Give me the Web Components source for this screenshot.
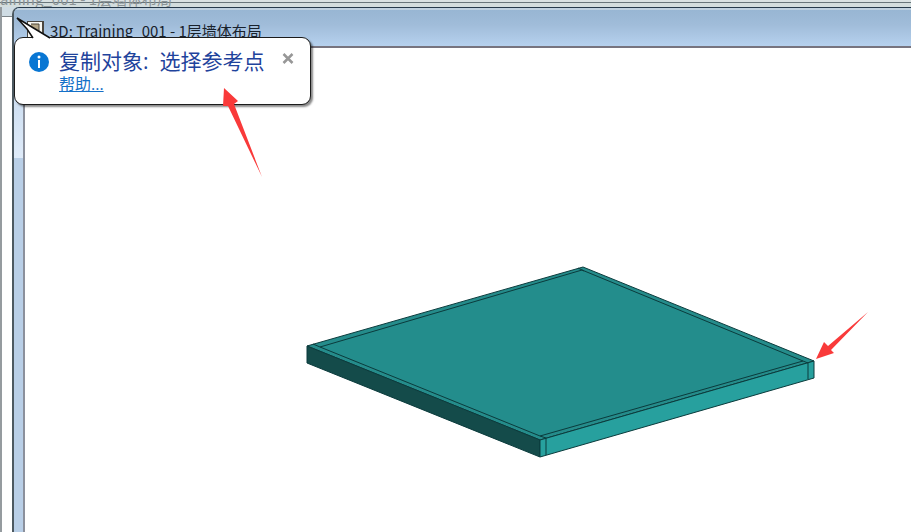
<!DOCTYPE html>
<html lang="zh-CN">
<head>
<meta charset="utf-8">
<title>3D: Training_001 - 1层墙体布局</title>
<style>
  html, body {
    height: 100%;
    margin: 0;
    overflow: hidden;
    background: #fff;
    font-family: "Open Sans", "Noto Sans CJK SC", sans-serif;
  }
</style>
</head>
<body>
<cad-desktop>
  <back-window slot="back">aining_001 - 1层墙体布局</back-window>
  <view-window>
    <span slot="title">3D: Training_001 - 1层墙体布局</span>
    <slab-model></slab-model>
  </view-window>
  <balloon-tip slot="overlay">
    复制对象:&nbsp; 选择参考点
    <a slot="link" href="#help">帮助...</a>
  </balloon-tip>
  <marker-arrows slot="overlay"></marker-arrows>
</cad-desktop>

<script>
class CadDesktop extends HTMLElement {
  constructor() {
    super();
    this.attachShadow({ mode: 'open' });
    this.shadowRoot.innerHTML = `
      <style>
        :host {
          display: block;
          position: relative;
          height: 100%;
          overflow: hidden;
        }
        .back { height: 100%; }
        .front {
          position: absolute;
          inset: 7px 0 0 12px;
        }
      </style>
      <div class="back"><slot name="back"></slot></div>
      <div class="front"><slot></slot></div>
      <slot name="overlay"></slot>
    `;
  }
}

class BackWindow extends HTMLElement {
  constructor() {
    super();
    this.attachShadow({ mode: 'open' });
    this.shadowRoot.innerHTML = `
      <style>
        :host {
          display: flex;
          flex-direction: column;
          height: 100%;
          box-sizing: border-box;
        }
        .title {
          display: flex;
          align-items: flex-end;
          height: 7px;
          overflow: hidden;
          background: linear-gradient(#d9e1e2 2px, #68757a 2px 3px, #d3dddd 3px);
          color: #8b9396;
          font-family: "Noto Sans CJK SC", sans-serif;
          font-size: 15px;
          line-height: 16px;
          white-space: nowrap;
        }
        .body {
          flex: 1;
          border-left: 2px solid #959b9f;
          background: linear-gradient(#cfdce4 9px, #7d858a 9px 10px, #fff 10px);
        }
      </style>
      <div class="title"><slot></slot></div>
      <div class="body"></div>
    `;
  }
}

class ViewWindow extends HTMLElement {
  constructor() {
    super();
    this.attachShadow({ mode: 'open' });
    this.shadowRoot.innerHTML = `
      <style>
        :host {
          display: flex;
          flex-direction: column;
          height: 100%;
          box-sizing: border-box;
          border-top: 1px solid #26394a;
          border-left: 2px solid #4c5961;
          border-top-left-radius: 7px;
          background: #bdd3ea;
          overflow: hidden;
        }
        .bar {
          display: flex;
          align-items: flex-end;
          gap: 6px;
          height: 38px;
          box-sizing: border-box;
          padding: 0 12px 5px 13px;
          border-top: 2px solid #bed0df;
          background: linear-gradient(#98b6d3, #a0bcd9 40%, #b6d1ee);
          color: #19222c;
          font-family: "Noto Sans CJK SC", sans-serif;
          font-size: 15px;
          line-height: 20px;
          white-space: nowrap;
        }
        .bar svg { flex: none; }
        .frame {
          flex: 1;
          display: flex;
          padding-left: 9px;
          background: linear-gradient(#bdd3ea, #dfebf9 112px, #b9cfe7 112px);
        }
        .view {
          flex: 1;
          border-top: 2px solid #77747f;
          border-left: 2px solid #8b909c;
          background: #fff;
        }
      </style>
      <div class="bar">
        <svg width="17" height="20" viewBox="0 0 17 20">
          <path d="M0 0h17v20H0z" fill="#4a4640"/>
          <path d="M1 1h14v18H1z" fill="#f8f7f1"/>
          <path d="M4 3h8v10H4z" fill="#b4a687"/>
          <path d="M4 3h8M12 3v10" stroke="#4d473b" fill="none"/>
        </svg>
        <slot name="title"></slot>
      </div>
      <div class="frame"><div class="view"><slot></slot></div></div>
    `;
  }
}

class SlabModel extends HTMLElement {
  constructor() {
    super();
    this.attachShadow({ mode: 'open' });
    this.shadowRoot.innerHTML = `
      <style>
        :host { display: block; padding: 216px 0 0 279px; }
        svg { display: block; }
      </style>
      <svg width="514" height="196" viewBox="304 264 514 196" stroke="#0b3b3c" stroke-linejoin="round" role="img" aria-label="3D">
        <path d="M307 346 583 267 814 361 540 440z" fill="#258c8b"/>
        <path d="M307 346 540 440V457L307 363z" fill="#144b4a"/>
        <path d="M540 440 814 361V378L540 457z" fill="#27a09e"/>
        <path d="M320 347 582 270 803 361 540 436z" fill="#238d8c"/>
        <path d="M313 344 320 347M578 268 584 271M803 361 808 363V379M540 436 546 438V455" fill="none"/>
      </svg>
    `;
  }
}

class BalloonTip extends HTMLElement {
  constructor() {
    super();
    this.attachShadow({ mode: 'open' });
    this.shadowRoot.innerHTML = `
      <style>
        :host {
          position: absolute;
          top: 37px;
          left: 14px;
          display: flex;
          align-items: flex-start;
          box-sizing: border-box;
          width: 297px;
          height: 68px;
          padding: 10px 14px 0 14px;
          border: 1px solid #1c1c1c;
          border-radius: 9px;
          background: #fff;
          box-shadow: 2px 2px 2px #0007;
        }
        .tail {
          position: absolute;
          left: 0;
          top: -22px;
        }
        .info { flex: none; margin-top: 4px; }
        .text {
          display: flex;
          flex-direction: column;
          align-items: flex-start;
          flex: 1;
          margin-left: 10px;
          white-space: nowrap;
        }
        .head {
          color: #1f439c;
          font-size: 21px;
          line-height: 26px;
        }
        ::slotted(a) {
          color: #1470c8;
          font-size: 16px;
          line-height: 20px;
        }
        button {
          display: flex;
          flex: none;
          padding: 5px 2px;
          border: 0;
          background: none;
        }
      </style>
      <svg class="tail" width="40" height="23" viewBox="0 0 40 23">
        <path d="M18 22 12 14 2 2 35 22V23H18z" fill="#fff"/>
        <path d="M18 22 12 13 2 2 35 22" fill="none" stroke="#111" stroke-width="1.500"/>
      </svg>
      <svg class="info" width="20" height="20" viewBox="0 0 20 20">
        <circle cx="10" cy="10" r="10" fill="#0876d3"/>
        <circle cx="10" cy="5" r="1.500" fill="#fff"/>
        <path d="M9 8h2v8H9z" fill="#fff"/>
      </svg>
      <div class="text">
        <span class="head"><slot></slot></span>
        <slot name="link"></slot>
      </div>
      <button type="button" aria-label="关闭">
        <svg width="12" height="11" viewBox="0 0 12 11">
          <path d="M1.500 1 10.500 10M10.500 1 1.500 10" stroke="#979797" stroke-width="2.500"/>
        </svg>
      </button>
    `;
  }
}

class MarkerArrows extends HTMLElement {
  constructor() {
    super();
    this.attachShadow({ mode: 'open' });
    this.shadowRoot.innerHTML = `
      <style>
        :host { position: absolute; inset: 0; pointer-events: none; }
        svg { display: block; width: 100%; height: 100%; }
      </style>
      <svg fill="#f93a3a">
        <path d="M224 88 238 101 234 104 262 177 228 106 223 106z"/>
        <path d="M816 359 824 342 828 346 868 312 831 350 834 353z"/>
      </svg>
    `;
  }
}

customElements.define('cad-desktop', CadDesktop);
customElements.define('back-window', BackWindow);
customElements.define('view-window', ViewWindow);
customElements.define('slab-model', SlabModel);
customElements.define('balloon-tip', BalloonTip);
customElements.define('marker-arrows', MarkerArrows);
</script>
</body>
</html>
